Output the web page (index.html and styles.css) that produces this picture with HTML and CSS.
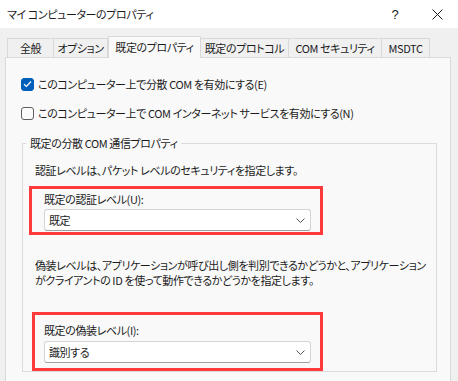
FILE: index.html
```html
<!DOCTYPE html>
<html lang="ja">
<head>
    <meta charset="UTF-8">
    <title>マイ コンピューターのプロパティ</title>
    <link rel="stylesheet" href="styles.css">
</head>
<body>
    <div class="titlebar">
        <span class="title">マイ コンピューターのプロパティ</span>
        <span class="help">?</span>
        <span class="close">
            <svg width="11" height="11" viewBox="0 0 11 11"><path d="M0.5 0.5 L10.5 10.5 M10.5 0.5 L0.5 10.5" stroke="#1b1b1b" stroke-width="1" fill="none"/></svg>
        </span>
    </div>

    <div class="tabs">
        <div class="tab w-general">全般</div>
        <div class="tab w-option">オプション</div>
        <div class="tab active">既定のプロパティ</div>
        <div class="tab w-protocol">既定のプロトコル</div>
        <div class="tab w-security">COM セキュリティ</div>
        <div class="tab w-msdtc">MSDTC</div>
    </div>

    <div class="panel">
        <label class="check-row">
            <span class="checkbox checked">
                <svg width="9" height="8" viewBox="0 0 9 8"><path d="M1 4.2 L3.4 6.5 L8 1.5" stroke="#fff" stroke-width="1.2" fill="none"/></svg>
            </span>
            このコンピューター上で分散 COM を有効にする(E)
        </label>
        <label class="check-row">
            <span class="checkbox"></span>
            このコンピューター上で COM インターネット サービスを有効にする(N)
        </label>

        <fieldset class="group">
            <legend>既定の分散 COM 通信プロパティ</legend>
            <p class="note first">認証レベルは、パケット レベルのセキュリティを指定します。</p>
            <div class="mark mark-auth">
                <div class="field-label">既定の認証レベル(U):</div>
                <div class="combo">
                    <span>既定</span>
                    <svg width="9" height="5" viewBox="0 0 9 5"><path d="M0.5 0.5 L4.5 4.5 L8.5 0.5" stroke="#555" stroke-width="1" fill="none"/></svg>
                </div>
            </div>
            <p class="note second">偽装レベルは、アプリケーションが呼び出し側を判別できるかどうかと、アプリケーション<br>がクライアントの ID を使って動作できるかどうかを指定します。</p>
            <div class="mark mark-imp">
                <div class="field-label">既定の偽装レベル(I):</div>
                <div class="combo">
                    <span>識別する</span>
                    <svg width="9" height="5" viewBox="0 0 9 5"><path d="M0.5 0.5 L4.5 4.5 L8.5 0.5" stroke="#555" stroke-width="1" fill="none"/></svg>
                </div>
            </div>
        </fieldset>
    </div>
</body>
</html>
```

FILE: styles.css
```css
body {
    margin: 0;
    background-color: #f0f0f0;
    font-family: "Noto Sans CJK JP", "Noto Sans", sans-serif;
    font-feature-settings: "palt";
    font-size: 11px;
    letter-spacing: -0.4px;
    color: #1b1b1b;
    overflow: hidden;
    white-space: nowrap;
}
.titlebar {
    background-color: #ffffff;
    height: 28px;
    display: flex;
    align-items: center;
    padding-left: 7px;
}
.title {
    flex: 1;
    line-height: 16px;
}
.help {
    width: 20px;
    text-align: center;
    margin-right: 27px;
    font-family: "Liberation Sans", sans-serif;
    font-size: 13px;
}
.close {
    width: 11px;
    margin-right: 15px;
    display: flex;
}
.tabs {
    display: flex;
    align-items: flex-end;
    margin-top: 8px;
    padding-left: 7px;
    height: 21px;
    position: relative;
    z-index: 1;
}
.tab {
    height: 19px;
    box-sizing: border-box;
    border: 1px solid #d9d9d9;
    border-bottom: none;
    border-left: none;
    display: flex;
    align-items: center;
    justify-content: center;
    line-height: 16px;
    background-color: #f0f0f0;
}
.tab:first-child {
    border-left: 1px solid #d9d9d9;
}
.w-general { width: 47px; }
.w-option { width: 54px; }
.w-protocol { width: 88px; }
.w-security { width: 93px; }
.w-msdtc { width: 48px; }
.tab.active {
    width: 93px;
    height: 22px;
    margin-bottom: -1px;
    border-left: 1px solid #d9d9d9;
    background-color: #f9f9f9;
    padding-bottom: 2px;
}
.panel {
    margin-left: 5px;
    margin-right: 7px;
    height: 340px;
    background-color: #f9f9f9;
    border: 1px solid #dadada;
    padding-top: 19px;
    box-sizing: border-box;
}
.check-row {
    display: flex;
    align-items: center;
    gap: 4px;
    margin-left: 15px;
    height: 14px;
    line-height: 14px;
    margin-bottom: 15px;
}
.checkbox {
    width: 13px;
    height: 13px;
    box-sizing: border-box;
    border: 1px solid #5f5f5f;
    border-radius: 3px;
    background-color: #fbfbfb;
    display: flex;
    align-items: center;
    justify-content: center;
}
.checkbox.checked {
    background-color: #005fb8;
    border-color: #005fb8;
}
.group {
    margin: 0 13px 0 16px;
    padding: 0;
    border: 1px solid #dcdcdc;
    min-width: 0;
}
.group legend {
    margin-left: 3px;
    padding: 0 3px 0 4px;
    line-height: 16px;
}
.note {
    margin: 0 0 0 12px;
    line-height: 15px;
}
.note.first {
    margin-top: 12px;
}
.note.second {
    margin-top: 23px;
}
.mark {
    border: 3px solid #ff3a3a;
    margin-right: 113px;
    display: flex;
    flex-direction: column;
}
.mark-auth {
    margin-top: 8px;
    margin-left: 6px;
    padding: 2px 9px 1px 12px;
    gap: 2px;
}
.mark-imp {
    margin-top: 24px;
    margin-left: 9px;
    padding: 7px 9px 5px 9px;
    gap: 3px;
}
.field-label {
    line-height: 16px;
}
.combo {
    height: 22px;
    box-sizing: border-box;
    background-color: #ffffff;
    border: 1px solid #d4d4d4;
    border-bottom-color: #a0a0a0;
    border-radius: 3px;
    display: flex;
    align-items: center;
    justify-content: space-between;
    padding: 0 5px 0 4px;
}
```
